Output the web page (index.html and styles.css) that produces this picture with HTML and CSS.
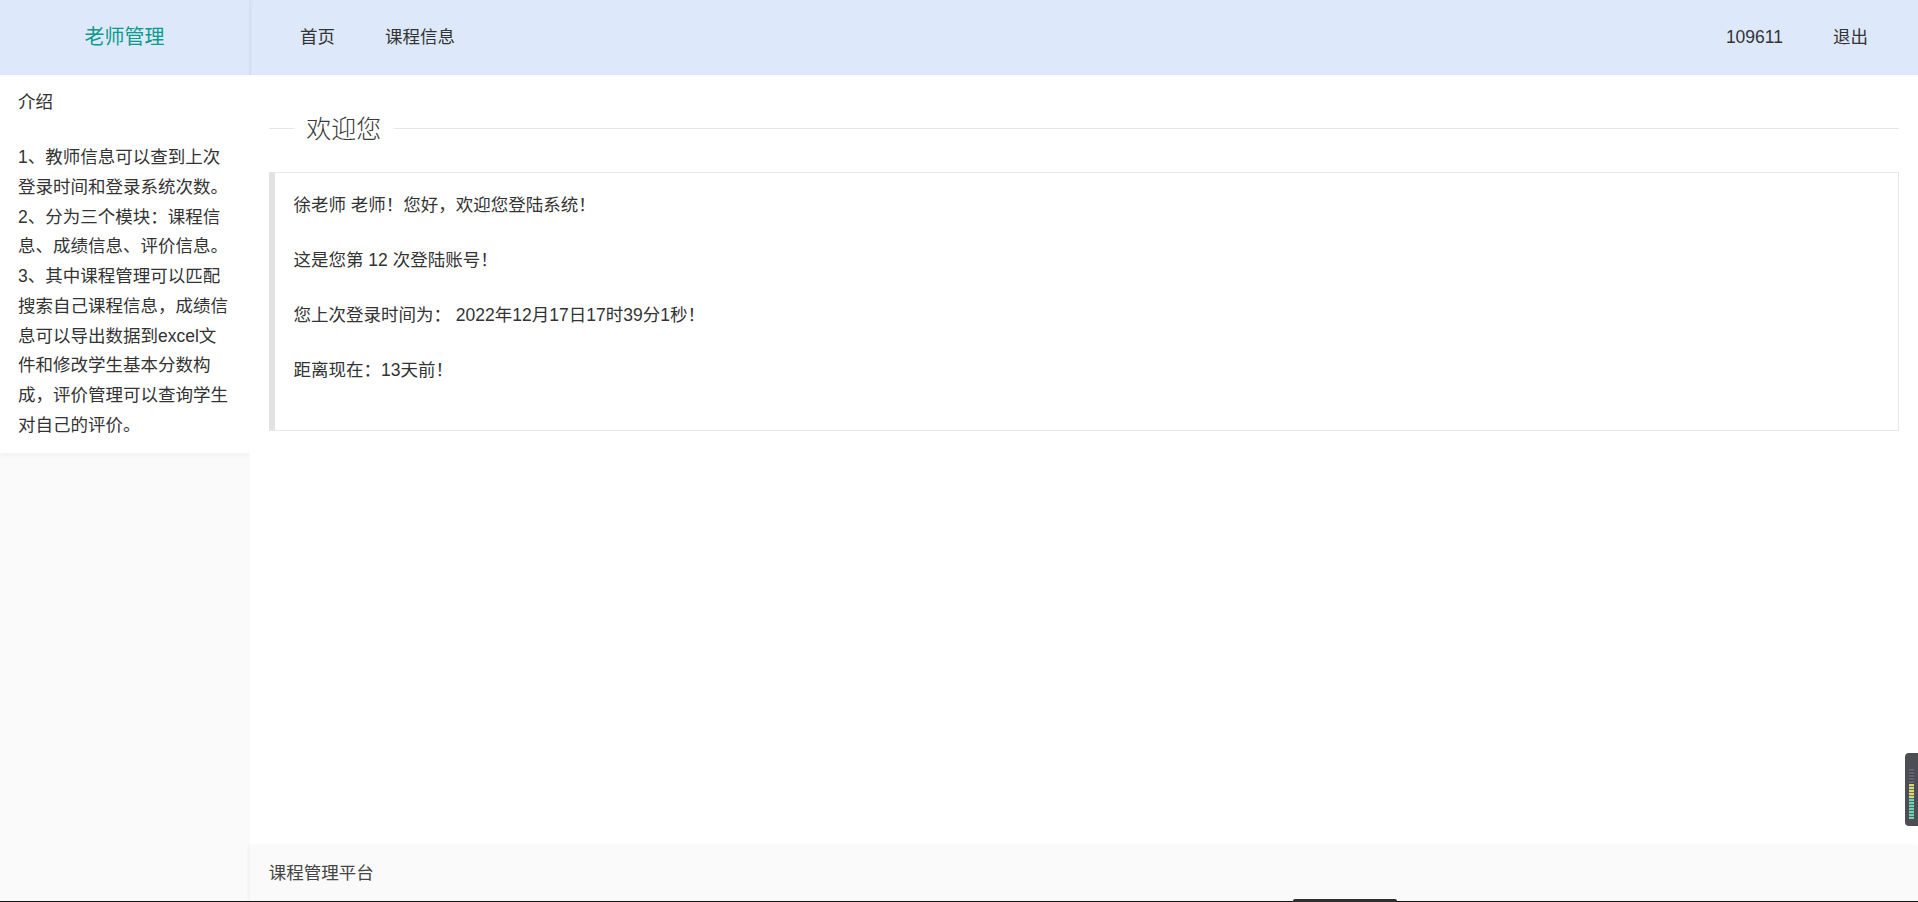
FILE: index.html
```html
<!DOCTYPE html>
<html lang="zh-CN">
<head>
<meta charset="utf-8">
<title>老师管理</title>
<link rel="stylesheet" href="styles.css">
</head>
<body>
<div class="app">
  <header class="header">
    <div class="logo">老师管理</div>
    <nav class="nav">
      <a href="#">首页</a>
      <a href="#">课程信息</a>
    </nav>
    <nav class="nav nav-right">
      <a href="#">109611</a>
      <a href="#">退出</a>
    </nav>
  </header>

  <aside class="side">
    <div class="side-card">
      <div class="side-title">介绍</div>
      <p class="side-text">1、教师信息可以查到上次登录时间和登录系统次数。2、分为三个模块：课程信息、成绩信息、评价信息。3、其中课程管理可以匹配搜索自己课程信息，成绩信息可以导出数据到excel文件和修改学生基本分数构成，评价管理可以查询学生对自己的评价。</p>
    </div>
  </aside>

  <main class="body">
    <div class="field-title">
      <span class="rule rule-short"></span>
      <span class="legend">欢迎您</span>
      <span class="rule"></span>
    </div>
    <blockquote class="quote">
      <p>徐老师 老师！您好，欢迎您登陆系统！</p>
      <p>这是您第 12 次登陆账号！</p>
      <p>您上次登录时间为： 2022年12月17日17时39分1秒！</p>
      <p>距离现在：13天前！</p>
    </blockquote>
  </main>

  <footer class="footer">课程管理平台</footer>
</div>

<div class="meter"><span class="meter-bars"></span></div>
<div class="taskbar-handle"></div>
</body>
</html>
```

FILE: styles.css
```css
* {
  box-sizing: border-box;
}

html, body {
  margin: 0;
  padding: 0;
  height: 100%;
  background: #ffffff;
  font-family: "Liberation Sans", "Noto Sans CJK SC", sans-serif;
  font-size: 17.5px;
  color: #333333;
  overflow: hidden;
}

.app {
  display: grid;
  grid-template-columns: 250px 1fr;
  grid-template-rows: 75px 1fr 55px;
  height: 100vh;
  border-bottom: 1px solid #141414;
}

/* Header */
.header {
  grid-column: 1 / -1;
  display: flex;
  align-items: stretch;
  background: #dde9fb;
}

.logo {
  width: 250px;
  flex: none;
  text-align: center;
  line-height: 75px;
  font-size: 20px;
  color: #0b9a8c;
  box-shadow: 1px 1px 2px rgba(0, 0, 0, 0.05);
  border-right: 1px solid #d3def0;
}

.nav {
  display: flex;
  padding: 0 25px;
}

.nav a {
  display: block;
  padding: 0 25px;
  line-height: 75px;
  color: #333333;
  text-decoration: none;
  font-size: 17.5px;
}

.nav-right {
  margin-left: auto;
}

/* Sidebar */
.side {
  grid-row: 2 / 4;
  background: #fafafa;
  overflow: hidden;
}

.side-card {
  background: #ffffff;
  padding: 12px 18px 12.5px;
  box-shadow: 0 3px 5px rgba(0, 0, 0, 0.035);
}

.side-title {
  line-height: 30px;
  margin-bottom: 26px;
}

.side-text {
  margin: 0;
  line-height: 29.75px;
}

/* Main body */
.body {
  padding: 18.75px;
  background: #ffffff;
}

.field-title {
  display: flex;
  align-items: center;
  height: 30px;
  margin: 20px 0 28px;
}

.rule {
  flex: 1;
  height: 1px;
  background: #e6e6e6;
}

.rule.rule-short {
  flex: none;
  width: 25px;
}

.legend {
  padding: 0 12.5px;
  font-size: 25px;
  line-height: 30px;
  color: #3a3a3a;
  font-weight: 300;
}

.quote {
  margin: 0;
  padding: 18.75px;
  border: 1px solid #e8e8e8;
  border-left: 6px solid #e2e2e2;
  line-height: 27.5px;
}

.quote p {
  margin: 0 0 27.5px;
}

/* Footer */
.footer {
  grid-column: 2;
  grid-row: 3;
  background: #fafafa;
  box-shadow: -1px 0 4px rgba(0, 0, 0, 0.06);
  padding-left: 18.75px;
  line-height: 55px;
  color: #444444;
}

/* Screen overlays captured in the screenshot */
.meter {
  position: fixed;
  right: 0;
  top: 753px;
  width: 13px;
  height: 73px;
  background: #4d4d56;
  border-radius: 4px 0 0 4px;
  display: flex;
  justify-content: center;
  padding-top: 16px;
}

.meter-bars {
  display: block;
  width: 5px;
  height: 50px;
  background:
    repeating-linear-gradient(to bottom, transparent 0 2px, rgba(40, 40, 48, 0.55) 2px 3px),
    linear-gradient(to bottom, #626270 0 30%, #d6d77a 30% 58%, #74cfb2 58% 100%);
}

.taskbar-handle {
  position: fixed;
  left: 1293px;
  bottom: 0;
  width: 104px;
  height: 3px;
  background: #2e2e2e;
  border-radius: 2px 2px 0 0;
}
```
